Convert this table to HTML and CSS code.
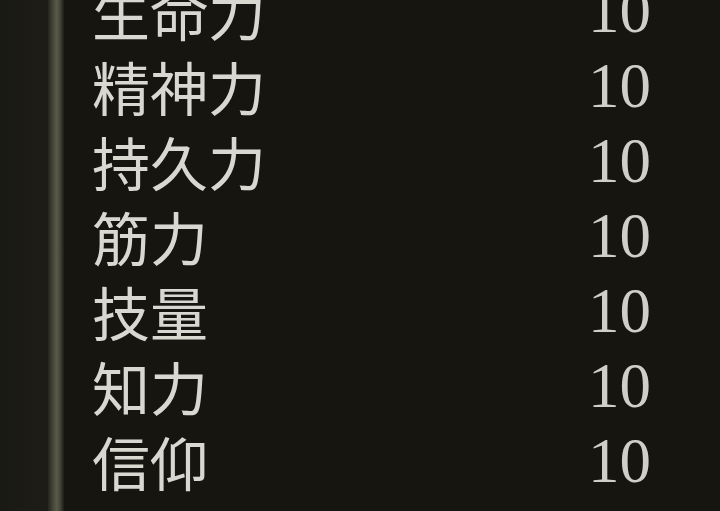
FILE: index.html
```html
<!DOCTYPE html>
<html lang="ja">
<head>
<meta charset="utf-8">
<link rel="stylesheet" href="styles.css">
</head>
<body>
<div class="screen">
  <div class="side"></div>
  <div class="rule"></div>
  <div class="stats">
    <div class="row"><span class="name">生命力</span><span class="val">10</span></div>
    <div class="row"><span class="name">精神力</span><span class="val">10</span></div>
    <div class="row"><span class="name">持久力</span><span class="val">10</span></div>
    <div class="row"><span class="name">筋力</span><span class="val">10</span></div>
    <div class="row"><span class="name">技量</span><span class="val">10</span></div>
    <div class="row"><span class="name">知力</span><span class="val">10</span></div>
    <div class="row"><span class="name">信仰</span><span class="val">10</span></div>
    <div class="row"><span class="name">神秘</span><span class="val">10</span></div>
  </div>
</div>
</body>
</html>
```
FILE: styles.css
```css
html, body {
  margin: 0;
  padding: 0;
  background: #16150f;
  overflow: hidden;
}
.screen {
  display: flex;
  width: 720px;
  height: 511px;
  overflow: hidden;
  background: #16150f;
}
.side {
  width: 48px;
  flex: none;
  background: linear-gradient(to right, #1a1a14 0%, #1d1c16 100%);
}
.rule {
  width: 16px;
  flex: none;
  background: linear-gradient(to right, #25251c 0%, #44443a 30%, #5a5a4a 55%, #3e3e33 80%, #1c1b15 100%);
}
.stats {
  flex: 1;
  padding-left: 28px;
  margin-top: -26px;
}
.row {
  display: grid;
  grid-template-columns: 496px auto;
  align-items: center;
  height: 75px;
}
.name {
  font-family: "Noto Sans CJK JP", sans-serif;
  font-size: 58px;
  line-height: 75px;
  color: #d8d8d0;
  font-weight: 400;
}
.val {
  font-family: "Liberation Serif", serif;
  font-size: 63px;
  line-height: 75px;
  color: #cfcfc7;
}
```
